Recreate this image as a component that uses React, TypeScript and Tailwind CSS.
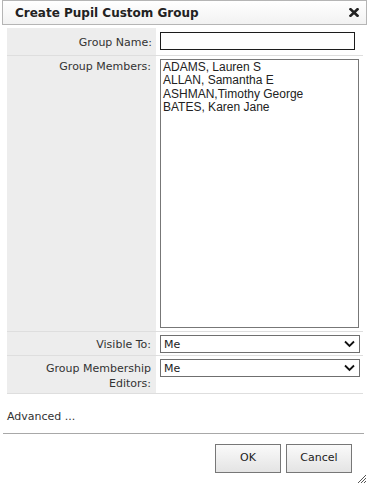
import React from 'react';

const members = ['ADAMS, Lauren S', 'ALLAN, Samantha E', 'ASHMAN,Timothy George', 'BATES, Karen Jane'];

function Chevron() {
  return (
    <svg width="11" height="8" viewBox="0 0 11 8" className="shrink-0">
      <path d="M1 1.5 L5.5 6 L10 1.5" fill="none" stroke="#111" strokeWidth="1.8" />
    </svg>
  );
}

function SelectBox({ value }: { value: string }) {
  return (
    <div className="flex h-[18px] w-[200px] items-center justify-between border border-[#6f6f6f] bg-white pl-[3px] pr-[4px] text-[11px] leading-none text-[#222]">
      <span>{value}</span>
      <Chevron />
    </div>
  );
}

export default function App() {
  return (
    <div className="relative h-[486px] w-[369px] bg-white font-['DejaVu_Sans',Verdana,sans-serif] text-[11px] text-[#333]">
      {/* Title bar */}
      <div className="ml-[2px] flex h-[25px] w-[365px] items-center justify-between border border-[#b5b5b5] bg-gradient-to-b from-white to-[#f2f2f2] pl-[12px] pr-[7px]">
        <span className="text-[12px] font-bold text-[#222]">Create Pupil Custom Group</span>
        <svg width="10" height="9" viewBox="0 0 10 9">
          <path d="M1.5 1.2 L8.5 7.8 M8.5 1.2 L1.5 7.8" stroke="#222" strokeWidth="2.6" strokeLinecap="square" />
        </svg>
      </div>

      {/* Form */}
      <div className="ml-[7px] mt-[3px] w-[356px]">
        <div className="flex h-[28px] border-b border-[#dedede]">
          <div className="w-[149px] bg-[#ededed] pr-[4px] pt-[7px] text-right leading-[15px]">Group Name:</div>
          <div className="pl-[4px] pt-[4px]">
            <div className="h-[18px] w-[195px] border border-[#1c1c1c] bg-white" />
          </div>
        </div>

        <div className="flex h-[276px] border-b border-[#dedede]">
          <div className="w-[149px] bg-[#ededed] pr-[5px] pt-[3px] text-right leading-[15px]">Group Members:</div>
          <div className="pl-[4px] pt-[3px]">
            <div className="h-[269px] w-[199px] border border-[#777] bg-white pl-[2px] pt-[1px] font-['Liberation_Sans',Arial,sans-serif] text-[12px] leading-[13.3px] text-[#222]">
              {members.map((m) => (
                <div key={m}>{m}</div>
              ))}
            </div>
          </div>
        </div>

        <div className="flex h-[24px] border-b border-[#dedede]">
          <div className="w-[149px] bg-[#ededed] pr-[5px] pt-[5px] text-right leading-[15px]">Visible To:</div>
          <div className="pl-[4px] pt-[3px]">
            <SelectBox value="Me" />
          </div>
        </div>

        <div className="flex h-[38px] border-b border-[#dedede]">
          <div className="w-[149px] bg-[#ededed] pr-[5px] pt-[5px] text-right leading-[15px]">
            Group Membership
            <br />
            Editors:
          </div>
          <div className="pl-[4px] pt-[3px]">
            <SelectBox value="Me" />
          </div>
        </div>
      </div>

      <div className="ml-[7px] mt-[15px] leading-[15px]">Advanced ...</div>

      <div className="ml-[3px] mt-[9px] w-[361px] border-t border-[#a8a8a8]" />

      <div className="mr-[17px] mt-[10px] flex justify-end gap-[5px]">
        <button className="h-[29px] w-[66px] border border-[#777] bg-gradient-to-b from-[#fafafa] to-[#e4e4e4] text-[11px] text-[#222]">
          OK
        </button>
        <button className="h-[29px] w-[66px] border border-[#777] bg-gradient-to-b from-[#fafafa] to-[#e4e4e4] text-[11px] text-[#222]">
          Cancel
        </button>
      </div>

      {/* Resize grip */}
      <svg className="absolute bottom-[2px] right-[2px]" width="11" height="11" viewBox="0 0 11 11">
        <path d="M10 2 L2 10 M10 5 L5 10 M10 8 L8 10" stroke="#555" strokeWidth="1" />
      </svg>
    </div>
  );
}
